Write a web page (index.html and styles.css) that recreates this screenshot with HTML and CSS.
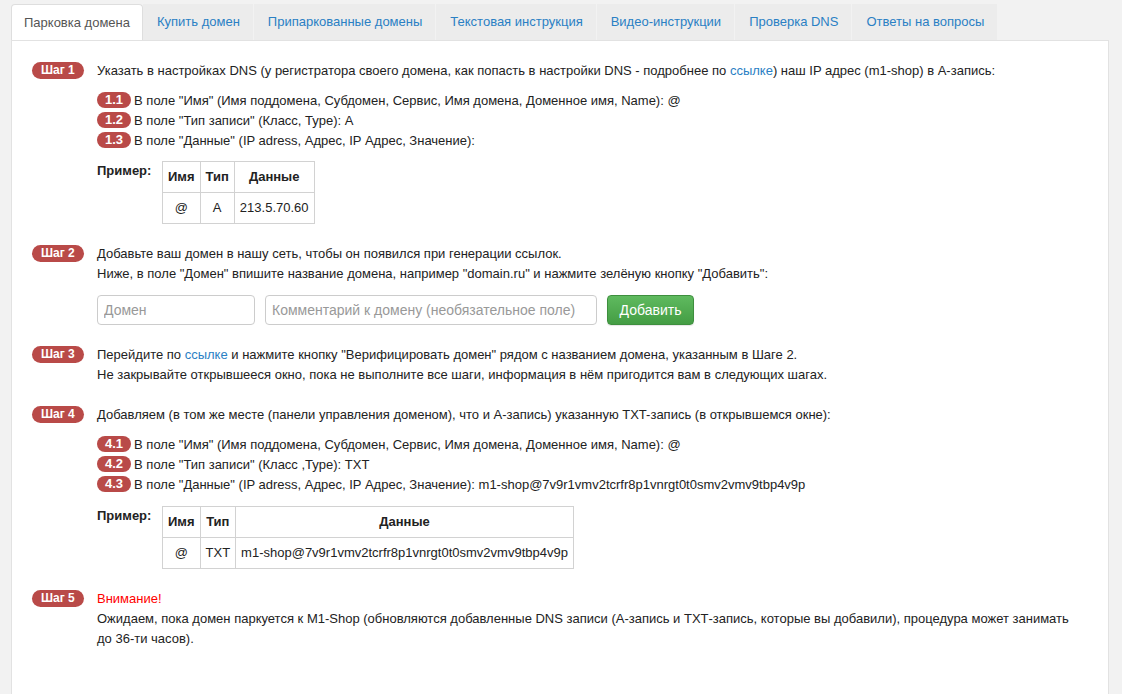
FILE: index.html
```html
<!DOCTYPE html>
<html lang="ru">
<head>
<meta charset="utf-8">
<title>Парковка домена</title>
<link rel="stylesheet" href="styles.css">
</head>
<body>
<nav class="tabs">
  <a class="tab active">Парковка домена</a>
  <a class="tab">Купить домен</a>
  <a class="tab">Припаркованные домены</a>
  <a class="tab">Текстовая инструкция</a>
  <a class="tab">Видео-инструкции</a>
  <a class="tab">Проверка DNS</a>
  <a class="tab">Ответы на вопросы</a>
</nav>
<main class="panel">
  <section class="step">
    <div class="step-label"><span class="badge">Шаг 1</span></div>
    <div class="step-body">
      <p>Указать в настройках DNS (у регистратора своего домена, как попасть в настройки DNS - подробнее по <a class="link">ссылке</a>) наш IP адрес (m1-shop) в А-запись:</p>
      <ul class="subs">
        <li><span class="sub">1.1</span>В поле "Имя" (Имя поддомена, Субдомен, Сервис, Имя домена, Доменное имя, Name): @</li>
        <li><span class="sub">1.2</span>В поле "Тип записи" (Класс, Type): A</li>
        <li><span class="sub">1.3</span>В поле "Данные" (IP adress, Адрес, IP Адрес, Значение):</li>
      </ul>
      <div class="example">
        <span class="example-label">Пример:</span>
        <table class="dns">
          <tr><th>Имя</th><th>Тип</th><th>Данные</th></tr>
          <tr><td>@</td><td>A</td><td>213.5.70.60</td></tr>
        </table>
      </div>
    </div>
  </section>
  <section class="step">
    <div class="step-label"><span class="badge">Шаг 2</span></div>
    <div class="step-body">
      <p>Добавьте ваш домен в нашу сеть, чтобы он появился при генерации ссылок.<br>Ниже, в поле "Домен" впишите название домена, например "domain.ru" и нажмите зелёную кнопку "Добавить":</p>
      <form class="add-form">
        <input class="field field-domain" type="text" placeholder="Домен">
        <input class="field field-comment" type="text" placeholder="Комментарий к домену (необязательное поле)">
        <button class="btn-add" type="button">Добавить</button>
      </form>
    </div>
  </section>
  <section class="step">
    <div class="step-label"><span class="badge">Шаг 3</span></div>
    <div class="step-body">
      <p>Перейдите по <a class="link">ссылке</a> и нажмите кнопку "Верифицировать домен" рядом с названием домена, указанным в Шаге 2.<br>Не закрывайте открывшееся окно, пока не выполните все шаги, информация в нём пригодится вам в следующих шагах.</p>
    </div>
  </section>
  <section class="step">
    <div class="step-label"><span class="badge">Шаг 4</span></div>
    <div class="step-body">
      <p>Добавляем (в том же месте (панели управления доменом), что и А-запись) указанную TXT-запись (в открывшемся окне):</p>
      <ul class="subs">
        <li><span class="sub">4.1</span>В поле "Имя" (Имя поддомена, Субдомен, Сервис, Имя домена, Доменное имя, Name): @</li>
        <li><span class="sub">4.2</span>В поле "Тип записи" (Класс ,Type): TXT</li>
        <li><span class="sub">4.3</span>В поле "Данные" (IP adress, Адрес, IP Адрес, Значение): m1-shop@7v9r1vmv2tcrfr8p1vnrgt0t0smv2vmv9tbp4v9p</li>
      </ul>
      <div class="example example-tight">
        <span class="example-label">Пример:</span>
        <table class="dns">
          <tr><th>Имя</th><th>Тип</th><th class="wide">Данные</th></tr>
          <tr><td>@</td><td>TXT</td><td>m1-shop@7v9r1vmv2tcrfr8p1vnrgt0t0smv2vmv9tbp4v9p</td></tr>
        </table>
      </div>
    </div>
  </section>
  <section class="step">
    <div class="step-label"><span class="badge">Шаг 5</span></div>
    <div class="step-body">
      <p><span class="warn">Внимание!</span><br>Ожидаем, пока домен паркуется к M1-Shop (обновляются добавленные DNS записи (А-запись и ТХТ-запись, которые вы добавили), процедура может занимать до 36-ти часов).</p>
    </div>
  </section>
</main>
</body>
</html>
```

FILE: styles.css
```css
html, body {
  margin: 0;
  padding: 0;
}
body {
  background: #f2f2f2;
  font-family: "Liberation Sans", Arial, sans-serif;
  font-size: 13px;
  line-height: 20px;
  color: #222;
  height: 694px;
  overflow: hidden;
}
.tabs {
  display: flex;
  padding: 4px 0 0 11px;
  height: 36px;
}
.tab {
  display: flex;
  align-items: center;
  padding: 0 13px 0 14px;
  margin-right: 1px;
  font-size: 13px;
  color: #2a80c4;
  background: #ececec;
  cursor: pointer;
}
.tab.active {
  color: #555;
  background: #fff;
  border: 1px solid #dedede;
  border-bottom: none;
  border-radius: 4px 4px 0 0;
  padding: 0 12px;
  margin-right: 0;
  position: relative;
  z-index: 1;
}
.panel {
  background: #fff;
  border: 1px solid #e2e2e2;
  margin-left: 11px;
  width: 1098px;
  box-sizing: border-box;
  padding: 20px 30px 40px 20px;
  min-height: 660px;
}
.step {
  display: grid;
  grid-template-columns: 65px 1fr;
  margin-bottom: 20px;
}
.step-label {
  padding-top: 1px;
}
.badge {
  display: inline-block;
  background: #b94a48;
  color: #fff;
  font-weight: bold;
  font-size: 12px;
  line-height: 17px;
  padding: 0 9px;
  border-radius: 9px;
  vertical-align: top;
}
p {
  margin: 0;
}
.link {
  color: #2a80c4;
  text-decoration: none;
}
.subs {
  list-style: none;
  margin: 10px 0 0;
  padding: 0;
}
.sub {
  display: inline-block;
  background: #b94a48;
  color: #fff;
  font-weight: bold;
  font-size: 13px;
  line-height: 16px;
  padding: 0 8px;
  border-radius: 8px;
  margin-right: 3px;
  vertical-align: 1px;
}
.example {
  display: flex;
  margin-top: 10px;
}
.example-tight {
  margin-top: 11px;
}
.example-label {
  font-weight: bold;
  width: 65px;
  flex: none;
}
.dns {
  border-collapse: collapse;
}
.dns th, .dns td {
  border: 1px solid #d2d2d2;
  padding: 5px 5px;
  text-align: center;
  line-height: 20px;
  font-size: 13px;
}
.dns th {
  font-weight: bold;
}
.add-form {
  display: flex;
  gap: 10px;
  margin: 11px 0 0;
}
.field {
  box-sizing: border-box;
  height: 30px;
  border: 1px solid #ccc;
  border-radius: 4px;
  padding: 0 6px;
  font-family: "Liberation Sans", Arial, sans-serif;
  font-size: 14px;
  color: #555;
  background: #fff;
}
.field::placeholder {
  color: #999;
}
.field-domain {
  width: 158px;
}
.field-comment {
  width: 332px;
}
.btn-add {
  box-sizing: border-box;
  height: 30px;
  width: 87px;
  border: 1px solid #3e8f3e;
  border-radius: 4px;
  background: linear-gradient(#5fba5f, #449d44);
  color: #fff;
  font-family: "Liberation Sans", Arial, sans-serif;
  font-size: 14px;
  box-shadow: 0 1px 1px rgba(0,0,0,0.1);
}
.warn {
  color: #f00;
}
```
